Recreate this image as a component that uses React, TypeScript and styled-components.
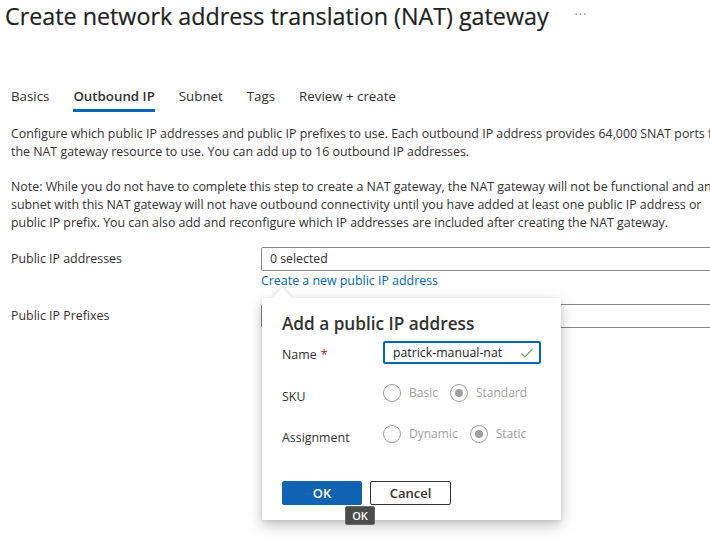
import React from "react";
import styled, { createGlobalStyle } from "styled-components";

const Global = createGlobalStyle`
  html, body { margin: 0; padding: 0; background: #fff; }
  body {
    font-family: "Open Sans", "Noto Sans", sans-serif;
    color: #323130;
    overflow: hidden;
    width: 710px;
    height: 555px;
  }
  * { box-sizing: border-box; }
`;

const Page = styled.div`
  width: 710px;
  height: 555px;
  overflow: hidden;
  position: relative;
`;

const Header = styled.header`
  display: flex;
  align-items: center;
  gap: 26px;
  padding: 0 0 0 5px;
  height: 32px;
`;

const Title = styled.h1`
  margin: 0;
  font-size: 23.3px;
  font-weight: 400;
  color: #201f1e;
  white-space: nowrap;
  -webkit-text-stroke: 0.2px #201f1e;
`;

const More = styled.span`
  font-size: 12px;
  color: #8a8886;
  letter-spacing: 1px;
  margin-top: -4px;
`;

const Tabs = styled.nav`
  display: flex;
  margin-top: 48px;
  padding-left: 11px;
  gap: 24px;
  height: 32px;
`;

const Tab = styled.div<{ $active?: boolean }>`
  font-size: 13.3px;
  font-weight: ${(p) => (p.$active ? 600 : 400)};
  color: #323130;
  height: 32px;
  line-height: 32px;
  border-bottom: 3px solid ${(p) => (p.$active ? "#0067b8" : "transparent")};
  white-space: nowrap;
`;

const Content = styled.div`
  padding: 13px 0 0 11px;
  width: 780px;
`;

const Para = styled.p`
  margin: 0 0 17px;
  font-size: 12.4px;
  line-height: 18px;
  white-space: nowrap;
  &:last-of-type {
    margin-bottom: 0;
  }
`;

const Row = styled.div<{ $mt: number }>`
  display: grid;
  grid-template-columns: 250px 470px;
  align-items: start;
  position: relative;
  margin-top: ${(p) => p.$mt}px;
`;

const Label = styled.div`
  font-size: 12.4px;
  line-height: 24px;
`;

const Field = styled.div`
  display: flex;
  flex-direction: column;
  position: relative;
`;

const Select = styled.div`
  height: 24px;
  border: 1px solid #8a8886;
  border-radius: 2px;
  font-size: 12.3px;
  line-height: 22px;
  padding-left: 8px;
`;

const Link = styled.a`
  font-size: 12.4px;
  color: #0067b8;
  line-height: 20px;
  text-decoration: none;
`;

const Callout = styled.div`
  position: absolute;
  left: 1px;
  top: 51px;
  width: 299px;
  height: 222px;
  background: #fff;
  box-shadow: 0 6px 14px rgba(0, 0, 0, 0.22), 0 1px 4px rgba(0, 0, 0, 0.12);
  padding: 14px 20px 0 20px;
  z-index: 2;
  &::before {
    content: "";
    position: absolute;
    left: 13px;
    top: -7px;
    width: 14px;
    height: 14px;
    background: #fff;
    transform: rotate(45deg);
    box-shadow: -2px -2px 4px rgba(0, 0, 0, 0.08);
  }
`;

const CalloutTitle = styled.h2`
  margin: 0 0 5px;
  font-size: 17.2px;
  font-weight: 600;
  color: #323130;
  line-height: 24px;
  position: relative;
`;

const FormRow = styled.div<{ $mt: number; $h: number }>`
  display: grid;
  grid-template-columns: 101px 1fr;
  align-items: center;
  margin-top: ${(p) => p.$mt}px;
  height: ${(p) => p.$h}px;
`;

const FLabel = styled.div<{ $dy?: number }>`
  font-size: 12.4px;
  color: #323130;
  margin-top: ${(p) => p.$dy ?? 8}px;
`;

const Req = styled.span`
  color: #a4262c;
  margin-left: 4px;
`;

const TextInput = styled.div`
  width: 158px;
  height: 23px;
  border: 2px solid #0067b8;
  border-radius: 2px;
  font-size: 12.3px;
  display: flex;
  align-items: center;
  justify-content: space-between;
  padding: 0 5px 0 8px;
  color: #201f1e;
`;

const Options = styled.div`
  display: flex;
  gap: 12px;
  align-items: center;
`;

const Option = styled.label`
  display: flex;
  align-items: center;
  gap: 8px;
  font-size: 12px;
  color: #a19f9d;
`;

const Circle = styled.span<{ $on?: boolean }>`
  width: 18px;
  height: 18px;
  border-radius: 50%;
  border: 1px solid #a19f9d;
  display: flex;
  align-items: center;
  justify-content: center;
  &::after {
    content: "";
    width: 8px;
    height: 8px;
    border-radius: 50%;
    background: ${(p) => (p.$on ? "#a19f9d" : "transparent")};
  }
`;

const Buttons = styled.div`
  display: flex;
  gap: 8px;
  margin-top: 40px;
  position: relative;
`;

const Button = styled.button<{ $primary?: boolean }>`
  width: ${(p) => (p.$primary ? 80 : 81)}px;
  height: 24px;
  border-radius: 2px;
  font-family: inherit;
  font-size: 13px;
  font-weight: 600;
  padding: 0;
  cursor: pointer;
  background: ${(p) => (p.$primary ? "#0f62b4" : "#fff")};
  color: ${(p) => (p.$primary ? "#fff" : "#323130")};
  border: 1px solid ${(p) => (p.$primary ? "#0f62b4" : "#323130")};
`;

const Tooltip = styled.div`
  position: absolute;
  left: 63px;
  top: 25px;
  width: 30px;
  height: 19px;
  background: #4b4b4b;
  color: #fff;
  font-size: 11px;
  font-weight: 600;
  border-radius: 2px;
  border: 1px solid #6a6a6a;
  display: flex;
  align-items: center;
  justify-content: center;
`;

const Check = () => (
  <svg width="14" height="14" viewBox="0 0 14 14">
    <path d="M1.5 7.5 L5 11 L12.5 3" fill="none" stroke="#5db04b" strokeWidth="1.2" />
  </svg>
);

export default function App() {
  return (
    <Page>
      <Global />
      <Header>
        <Title>Create network address translation (NAT) gateway</Title>
        <More>···</More>
      </Header>
      <Tabs>
        <Tab>Basics</Tab>
        <Tab $active>Outbound IP</Tab>
        <Tab>Subnet</Tab>
        <Tab>Tags</Tab>
        <Tab>Review + create</Tab>
      </Tabs>
      <Content>
        <Para>
          Configure which public IP addresses and public IP prefixes to use. Each outbound IP address provides 64,000 SNAT ports for
          <br />
          the NAT gateway resource to use. You can add up to 16 outbound IP addresses.
        </Para>
        <Para>
          Note: While you do not have to complete this step to create a NAT gateway, the NAT gateway will not be functional and any
          <br />
          subnet with this NAT gateway will not have outbound connectivity until you have added at least one public IP address or
          <br />
          public IP prefix. You can also add and reconfigure which IP addresses are included after creating the NAT gateway.
        </Para>
        <Row $mt={15}>
          <Label>Public IP addresses</Label>
          <Field>
            <Select>0 selected</Select>
            <Link href="#">Create a new public IP address</Link>
            <Callout>
              <CalloutTitle>Add a public IP address</CalloutTitle>
              <FormRow $mt={0} $h={22}>
                <FLabel $dy={4}>
                  Name<Req>*</Req>
                </FLabel>
                <TextInput>
                  patrick-manual-nat
                  <Check />
                </TextInput>
              </FormRow>
              <FormRow $mt={17} $h={20}>
                <FLabel>SKU</FLabel>
                <Options>
                  <Option>
                    <Circle />
                    Basic
                  </Option>
                  <Option>
                    <Circle $on />
                    Standard
                  </Option>
                </Options>
              </FormRow>
              <FormRow $mt={21} $h={20}>
                <FLabel>Assignment</FLabel>
                <Options>
                  <Option>
                    <Circle />
                    Dynamic
                  </Option>
                  <Option>
                    <Circle $on />
                    Static
                  </Option>
                </Options>
              </FormRow>
              <Buttons>
                <Button $primary>OK</Button>
                <Button>Cancel</Button>
                <Tooltip>OK</Tooltip>
              </Buttons>
            </Callout>
          </Field>
        </Row>
        <Row $mt={13}>
          <Label>Public IP Prefixes</Label>
          <Field>
            <Select />
          </Field>
        </Row>
      </Content>
    </Page>
  );
}
